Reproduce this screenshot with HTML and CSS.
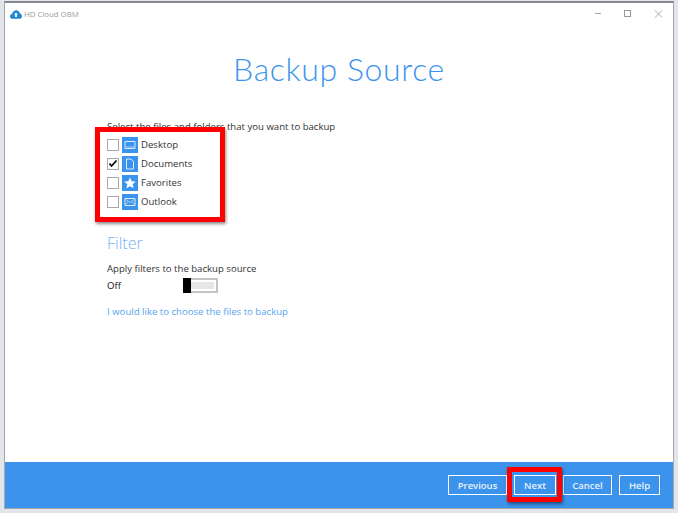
FILE: index.html
```html
<!DOCTYPE html>
<html lang="en">
<head>
<meta charset="utf-8">
<title>Backup Source</title>
<link rel="stylesheet" href="styles.css">
</head>
<body>
<div class="window">
  <header class="titlebar">
    <div class="app">
      <svg class="app-icon" width="12" height="9" viewBox="0 0 14 10"><path d="M3.2 10C1.4 10 0 8.800 0 7.200 0 5.800 1 4.700 2.400 4.500 2.800 2 4.800 0 7.200 0c2.200 0 4 1.600 4.400 3.700C13 4 14 5.400 14 7c0 1.700-1.300 3-3 3z" fill="#1e88d0"/><path d="M7 2.800 4.800 5.200H6V8h2V5.200h1.200z" fill="#fff"/></svg>
      <span class="app-name">HD Cloud OBM</span>
    </div>
    <div class="controls">
      <svg width="10" height="10" viewBox="0 0 10 10"><path d="M1 4.500h6" stroke="#aaa" fill="none"/></svg>
      <svg width="10" height="10" viewBox="0 0 10 10"><rect x=".5" y="1.500" width="6" height="6" stroke="#999" fill="none"/></svg>
      <svg width="10" height="10" viewBox="0 0 10 10"><path d="M1 1.500l7 7M8 1.500l-7 7" stroke="#aaa" fill="none"/></svg>
    </div>
  </header>
  <main class="content">
    <h1 class="title">Backup Source</h1>
    <p class="label">Select the files and folders that you want to backup</p>
    <ul class="sources">
      <li class="source"><span class="check"></span><span class="tile"><svg width="12" height="10" viewBox="0 0 12 10"><path d="M1 1.500h10v7H1z" stroke="#dcebfb" fill="none"/><path d="M1.500 7h9" stroke="#a9cff6" fill="none"/></svg></span>Desktop</li>
      <li class="source"><span class="check on"><svg width="10" height="9" viewBox="0 0 10 9"><path d="M1.500 4.500l2 2.500L8.500 1.500" stroke="#000" stroke-width="1.700" fill="none"/></svg></span><span class="tile"><svg width="10" height="12" viewBox="0 0 10 12"><path d="M1.500 1h4.500l2.500 2.500V11h-7z" stroke="#dcebfb" fill="none"/></svg></span>Documents</li>
      <li class="source"><span class="check"></span><span class="tile"><svg width="12" height="12" viewBox="0 0 12 12"><path d="M6 .5l1.700 3.700 4 .4-3 2.700.9 4L6 9.300 2.400 11.300l.9-4-3-2.700 4-.4z" fill="#fff"/></svg></span>Favorites</li>
      <li class="source"><span class="check"></span><span class="tile"><svg width="12" height="10" viewBox="0 0 12 10"><path d="M1 1.500h10v7H1z" stroke="#dcebfb" fill="none"/><path d="M1 2l5 3.500L11 2M1 8l3.500-3.500M11 8 7.500 4.500" stroke="#a9cff6" fill="none"/></svg></span>Outlook</li>
    </ul>
    <h2 class="filter">Filter</h2>
    <p class="apply">Apply filters to the backup source</p>
    <div class="toggle-row">
      <span class="off">Off</span>
      <span class="toggle"><span class="knob"></span><span class="track"></span></span>
    </div>
    <a class="choose" href="#">I would like to choose the files to backup</a>
  </main>
  <footer class="footer">
    <button class="btn prev">Previous</button>
    <button class="btn next">Next</button>
    <button class="btn cancel">Cancel</button>
    <button class="btn help">Help</button>
  </footer>
</div>
<div class="mark mark-list"></div>
<div class="mark mark-next"></div>
</body>
</html>
```
FILE: styles.css
```css
* { box-sizing: border-box; }
html, body { margin: 0; height: 100%; }
body {
  position: relative;
  width: 678px;
  height: 513px;
  overflow: hidden;
  padding: 1px 4px 4px 4px;
  background: #e2e5ea;
  font-family: "Open Sans", sans-serif;
  font-size: 9.600px;
  color: #333;
}
.window {
  height: 508px;
  display: flex;
  flex-direction: column;
  background: #fff;
  border: 1px solid #a4a6aa;
  border-top: 2px solid #85888c;
}
.titlebar {
  height: 25px;
  display: flex;
  justify-content: space-between;
  align-items: center;
  padding: 0 9px 3px 5px;
  flex: none;
}
.app { display: flex; align-items: center; gap: 2px; }
.app-name { font-size: 7.800px; color: #9a9a9a; }
.controls { display: flex; gap: 20px; }
.content { flex: 1; padding: 0 0 0 102px; position: relative; }
.title {
  margin: 23px 0 0 0;
  padding-right: 102px;
  text-align: center;
  font-family: "Lato", sans-serif;
  font-weight: 300;
  font-size: 32px;
  line-height: 36px;
  letter-spacing: .6px;
  color: #3d94ec;
}
.label { margin: 33px 0 0; line-height: 14px; }
.sources { list-style: none; margin: 1px 0 0; padding: 0; }
.source { height: 19px; display: flex; align-items: center; }
.check {
  width: 12px; height: 12px;
  margin-right: 3px;
  border: 1px solid #a9a9a9;
  display: flex; align-items: center; justify-content: center;
}
.tile {
  width: 16px; height: 16px;
  margin-right: 3px;
  background: #3a93ec;
  display: flex; align-items: center; justify-content: center;
}
.filter {
  margin: 21px 0 0;
  font-weight: 300;
  font-size: 16px;
  line-height: 22px;
  color: #74b2f2;
}
.apply { margin: 8px 0 0; line-height: 14px; }
.toggle-row { display: flex; align-items: center; height: 16px; margin-top: 1px; }
.off { width: 76px; color: #111; }
.toggle {
  width: 35px; height: 15px;
  border: 2px solid #c4c4c4;
  border-left: 0;
  display: flex;
  align-items: stretch;
  background: #fff;
}
.knob { width: 8px; margin: -2px 0; background: #000; }
.track { flex: 1; margin: 2px 2px 2px 0; background: #e6e6e6; }
.choose {
  display: block;
  margin-top: 12px;
  line-height: 14px;
  color: #58a4ee;
  text-decoration: none;
}
.footer {
  height: 46px;
  flex: none;
  display: flex;
  justify-content: flex-end;
  align-items: center;
  gap: 7px;
  padding: 0 13px 0 0;
  background: #3b93ec;
}
.btn {
  height: 20px;
  padding: 0;
  background: transparent;
  border: 1px solid #fff;
  color: #e8f2fd;
  font-family: "Open Sans", sans-serif;
  font-size: 9.500px;
  font-weight: 600;
}
.prev { width: 59px; }
.next { width: 42px; }
.cancel { width: 49px; }
.help { width: 41px; }
.mark {
  position: absolute;
  border: 5px solid #f00;
  box-shadow: 1px 2px 3px rgba(0, 0, 0, .45);
}
.mark-list { left: 95px; top: 127px; width: 130px; height: 95px; }
.mark-next { left: 507px; top: 467px; width: 55px; height: 35px; }
```
